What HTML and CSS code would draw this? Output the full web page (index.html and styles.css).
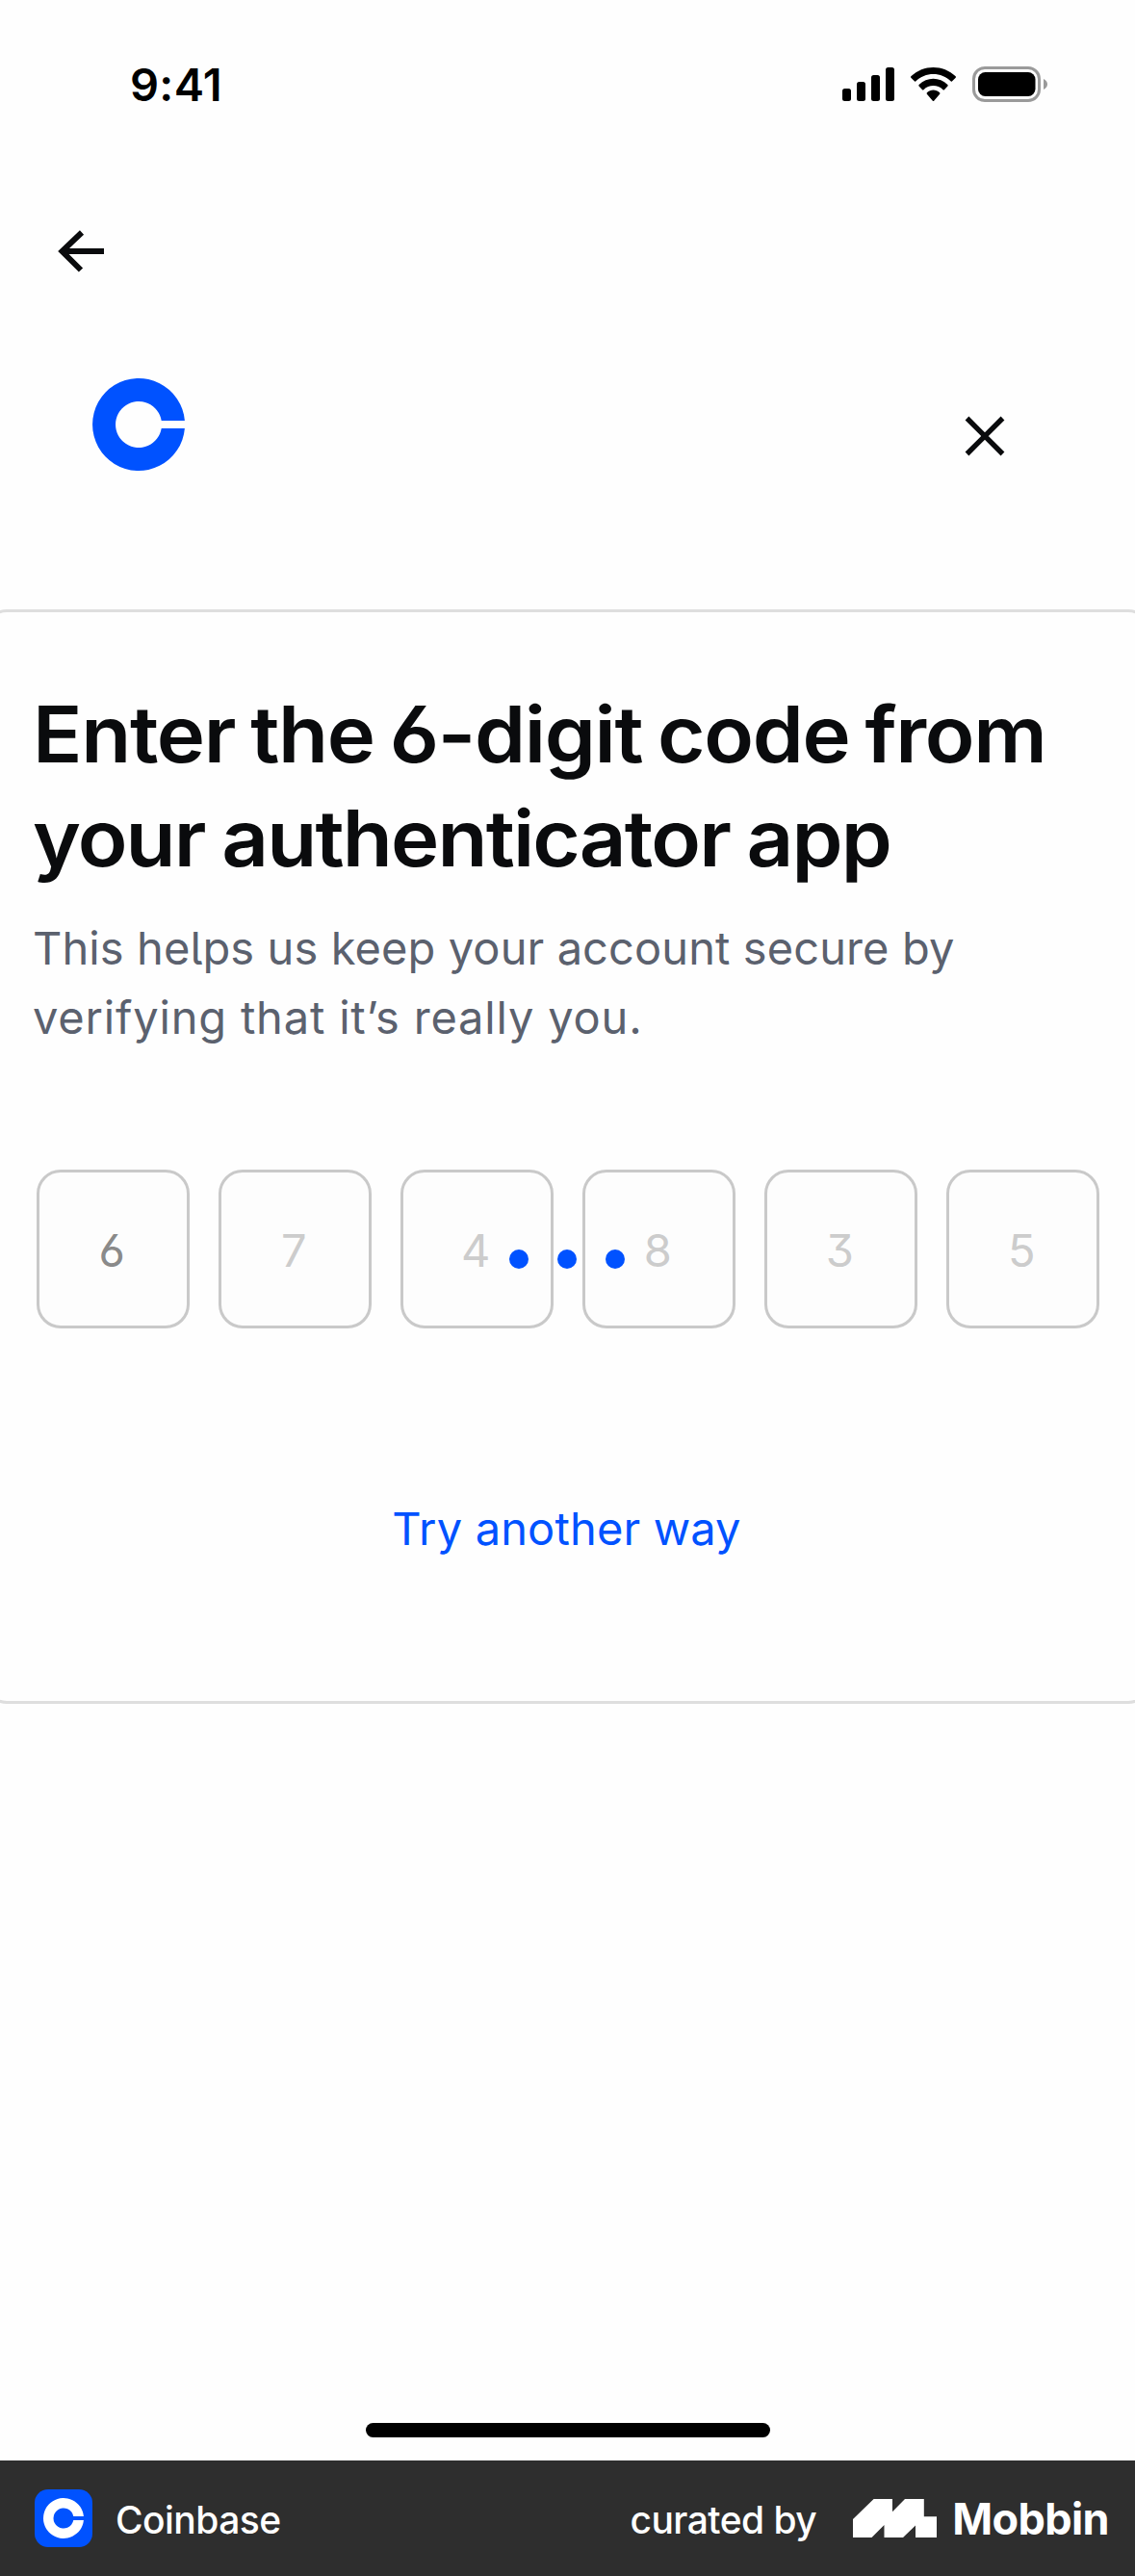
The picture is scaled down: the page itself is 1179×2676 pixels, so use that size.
FILE: index.html
```html
<!DOCTYPE html>
<html lang="en">
<head>
<meta charset="utf-8">
<title>Coinbase – Two-step verification</title>
<link rel="stylesheet" href="styles.css">
</head>
<body>
<div class="screen">
  <header class="status-bar">
    <span class="time">9:41</span>
    <div class="status-icons">
      <svg class="signal" viewBox="0 0 54 35"><rect y="22" width="9" height="13" rx="2.5"/><rect x="15" y="15" width="9" height="20" rx="2.5"/><rect x="30" y="8" width="9" height="27" rx="2.5"/><rect x="45" width="9" height="35" rx="2.5"/></svg>
      <svg class="wifi" viewBox="0 0 17.143 12.27" preserveAspectRatio="none"><path d="M8.571 2.466C11.058 2.466 13.45 3.388 15.253 5.042C15.389 5.17 15.606 5.168 15.739 5.038L17.037 3.775C17.177 3.638 17.175 3.415 17.034 3.281C12.303-1.094 4.839-1.094.108 3.281C-.034 3.415-.036 3.638.105 3.775L1.403 5.038C1.536 5.168 1.753 5.17 1.889 5.042C3.692 3.388 6.084 2.466 8.571 2.466ZM8.568 6.687C9.925 6.686 11.234 7.198 12.24 8.122C12.376 8.253 12.591 8.251 12.723 8.116L14.011 6.797C14.151 6.653 14.149 6.418 14.005 6.277C10.941 3.386 6.197 3.386 3.133 6.277C2.989 6.418 2.987 6.653 3.128 6.797L4.415 8.116C4.548 8.251 4.762 8.253 4.898 8.122C5.904 7.199 7.212 6.687 8.568 6.687ZM11.092 9.48C11.094 9.585 11.057 9.687 10.99 9.761L8.813 12.156C8.682 12.302 8.461 12.302 8.33 12.156L6.153 9.761C6.016 9.607 6.022 9.362 6.165 9.216C7.554 7.93 9.589 7.93 10.978 9.216C11.05 9.288 11.09 9.38 11.092 9.48Z"/></svg>
      <svg class="battery" viewBox="0 0 78 37"><rect x="1.5" y="1.5" width="68" height="34" rx="11.5" fill="none" stroke="#9a9a9a" stroke-width="3"/><rect x="6" y="6" width="59.5" height="25" rx="7.5"/><path d="M74 13v11c2.400-1 4-3 4-5.500s-1.600-4.500-4-5.500z" fill="#9a9a9a"/></svg>
    </div>
  </header>

  <nav class="nav">
    <svg class="back" viewBox="0 0 50 44"><path d="M4 22h44M25 2.500L4.500 22 24 41.500" fill="none" stroke="#0a0b0d" stroke-width="6"/></svg>
  </nav>

  <div class="brand-row">
    <svg class="logo" viewBox="0 0 96 96"><path d="M95.900 44A48 48 0 1 0 95.900 52H71.700A24 24 0 1 1 71.700 44Z" fill="#0052ff"/></svg>
    <svg class="close" viewBox="0 0 42 42"><path d="M2.500 2.500l37 37M39.500 2.500l-37 37" stroke="#0a0b0d" stroke-width="5.400"/></svg>
  </div>

  <main class="card">
    <h1 class="title"><span class="title-first">Enter the 6-digit code from</span><br><span class="title-second">your authenticator app</span></h1>
    <p class="lead"><span class="lead-first">This he<span class="tail">l</span>ps us keep your account secure by</span><br><span class="lead-second">verifying that it’s really you.</span></p>
    <div class="code">
      <span class="digit digit-active">6</span>
      <span class="digit">7</span>
      <span class="digit">4</span>
      <span class="digit">8</span>
      <span class="digit">3</span>
      <span class="digit">5</span>
      <div class="loader"><i></i><i></i><i></i></div>
    </div>
    <a class="alt">Try another way</a>
  </main>

  <div class="home-indicator"></div>

  <footer class="footer">
    <svg class="app-icon" viewBox="0 0 60 60"><rect width="60" height="60" rx="14" fill="#0052ff"/><path d="M50.900 28A21 21 0 1 0 50.900 32H40.300A10.500 10.500 0 1 1 40.300 28Z" fill="#fff"/></svg>
    <span class="app-name">Coinbase</span>
    <span class="curated">curated by</span>
    <svg class="mobbin-mark" viewBox="0 0 87 40"><path d="M0 21L21.600 0H41V13.300L54 0H73.800V18.300H87V40H65V27.500L52 40H32.500V27L19.500 40H0Z" fill="#fff"/></svg>
    <span class="mobbin">Mobbin</span>
  </footer>
</div>
</body>
</html>
```
FILE: styles.css
```css
* { box-sizing: border-box; }
body {
  margin: 0;
  background: #fefefe;
  color: #0a0b0d;
  font-family: Inter, "Liberation Sans", sans-serif;
}
svg { display: block; overflow: visible; flex: none; }
.screen {
  width: 1179px;
  height: 2676px;
  display: flex;
  flex-direction: column;
  overflow: hidden;
}
.status-bar {
  height: 176px;
  padding: 0 91px 0 135px;
  display: flex;
  justify-content: space-between;
  align-items: center;
  color: #000;
}
.time { font-size: 47px; font-weight: 600; letter-spacing: 0.300px; padding-bottom: 2px; }
.status-icons { display: flex; align-items: center; padding-bottom: 1px; }
.signal { width: 54px; height: 35px; margin-right: 17px; }
.wifi { width: 47px; height: 35px; margin-right: 17px; }
.battery { width: 78px; height: 37px; }
.nav { height: 170px; padding: 63px 0 0 60px; }
.back { width: 50px; height: 44px; }
.brand-row {
  height: 287px;
  padding: 47px 135px 0 96px;
  display: flex;
  justify-content: space-between;
}
.logo { width: 96px; height: 96px; }
.close { width: 42px; height: 42px; margin-top: 39px; }
.card {
  height: 1137px;
  margin: 0 -17px;
  padding: 73px 48px 0;
  border: 3px solid #dedede;
  border-radius: 24px;
  display: flex;
  flex-direction: column;
}
.title {
  margin: 0;
  font-size: 81px;
  line-height: 108px;
  font-weight: 600;
  white-space: nowrap;
  font-feature-settings: "cv03" 1;
  transform: scaleX(1.05);
  transform-origin: left;
}
.title-first { letter-spacing: -1.250px; word-spacing: -4px; }
.title-second { letter-spacing: -1.750px; word-spacing: -2px; }
.lead {
  margin: 24px 0 0;
  font-size: 47px;
  line-height: 72px;
  color: #5b616e;
  white-space: nowrap;
}
.lead-first { letter-spacing: 0.100px; }
.lead-second { letter-spacing: 0.820px; }
.tail { font-feature-settings: "cv05" 1; }
.code {
  position: relative;
  display: flex;
  gap: 30.500px;
  margin: 122px 0 0 4px;
}
.digit {
  flex: none;
  width: 158.500px;
  height: 165px;
  border: 3px solid #c9c9c9;
  border-radius: 25px;
  background: #fdfdfd;
  display: flex;
  align-items: center;
  justify-content: center;
  padding: 2px 2px 0 0;
  font-size: 47px;
  color: #ccc;
  font-feature-settings: "cv03" 1, "cv09" 1;
}
.digit-active { color: #8a8a8a; }
.loader {
  position: absolute;
  left: 491px;
  top: 83px;
  display: flex;
  gap: 30px;
}
.loader i { width: 20px; height: 20px; border-radius: 50%; background: #0052ff; }
.alt {
  align-self: center;
  margin: 172px 2px 0 0;
  font-size: 47px;
  line-height: 72px;
  letter-spacing: 0.150px;
  color: #0052ff;
}
.home-indicator {
  width: 420px;
  height: 15px;
  margin: 747px 0 24px 380px;
  border-radius: 7.500px;
  background: #000;
}
.footer {
  height: 120px;
  padding: 2px 27px 0 36px;
  display: flex;
  align-items: center;
  background: #2e2e2e;
  color: #fff;
}
.app-icon { width: 60px; height: 60px; margin: -2px 24px 0 0; }
.app-name, .curated { font-size: 39px; font-weight: 500; letter-spacing: -0.550px; }
.curated { margin-left: auto; margin-right: 38px; }
.mobbin-mark { width: 87px; height: 40px; margin: -2px 16px 0 0; }
.mobbin { font-size: 45px; font-weight: 700; letter-spacing: -0.600px; margin-top: -2px; }
```
